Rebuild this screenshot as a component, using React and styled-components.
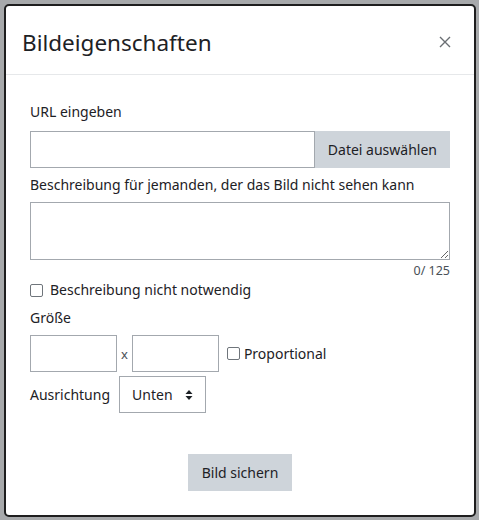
import React from "react";
import styled, { createGlobalStyle } from "styled-components";

const GlobalStyle = createGlobalStyle`
    html, body {
        margin: 0;
        padding: 0;
        background: #a7a9ab;
    }
    body {
        font-family: "Noto Sans", "Open Sans", sans-serif;
        color: #1d2125;
    }
`;

const Backdrop = styled.div`
    width: 479px;
    height: 520px;
    padding: 4px 3px 3px 4px;
    box-sizing: border-box;
`;

const Dialog = styled.div`
    width: 472px;
    height: 513px;
    box-sizing: border-box;
    background: #fff;
    border: 2px solid #1e1e1e;
    border-radius: 5px;
    display: flex;
    flex-direction: column;
`;

const Header = styled.div`
    display: flex;
    align-items: center;
    justify-content: space-between;
    height: 69px;
    box-sizing: border-box;
    padding: 4px 22px 0 16px;
    border-bottom: 1px solid #e6e8ea;
`;

const Title = styled.h5`
    margin: 0;
    font-size: 22.5px;
    font-weight: 400;
    line-height: 1.2;
    color: #1d2125;
`;

const Close = styled.button`
    border: none;
    background: none;
    padding: 0;
    width: 14px;
    height: 14px;
    display: flex;
    align-items: center;
    justify-content: center;
    cursor: pointer;
`;

const Body = styled.div`
    flex: 1;
    display: flex;
    flex-direction: column;
    padding: 26px 24px 0 24px;
    font-size: 14px;
`;

const Label = styled.label`
    display: block;
    line-height: 22px;
    margin-top: ${(p) => p.$mt || 0}px;
    margin-bottom: ${(p) => p.$mb || 8}px;
`;

const InputGroup = styled.div`
    display: flex;
    height: 37px;
    margin-bottom: 6px;
`;

const TextInput = styled.input`
    box-sizing: border-box;
    height: 37px;
    width: ${(p) => (p.$w ? `${p.$w}px` : "auto")};
    flex: ${(p) => (p.$w ? "none" : 1)};
    min-width: 0;
    border: 1px solid #a3a8ae;
    border-radius: 0;
    padding: 6px 10px;
    font: inherit;
    outline: none;
`;

const GreyButton = styled.button`
    box-sizing: border-box;
    height: 37px;
    border: none;
    border-radius: 0;
    background: #ced4da;
    color: #1d2125;
    font: inherit;
    padding: 0 ${(p) => p.$px || 13}px;
    cursor: pointer;
`;

const TextArea = styled.textarea`
    box-sizing: border-box;
    display: block;
    width: 100%;
    height: 58px;
    border: 1px solid #a3a8ae;
    border-radius: 0;
    font: inherit;
    padding: 6px 10px;
    resize: vertical;
    outline: none;
`;

const Counter = styled.div`
    text-align: right;
    font-size: 12.5px;
    line-height: 17px;
    padding-top: 2px;
    color: #495057;
`;

const CheckRow = styled.label`
    display: flex;
    align-items: center;
    gap: ${(p) => p.$gap || 7}px;
    margin-left: ${(p) => p.$ml || 0}px;
    line-height: 22px;
`;

const Box = styled.span`
    width: 11px;
    height: 11px;
    border: 1px solid #6f757b;
    border-radius: 2px;
    background: #fff;
    flex: none;
`;

const Row = styled.div`
    display: flex;
    align-items: center;
    gap: ${(p) => p.$gap || 8}px;
    margin-top: ${(p) => p.$mt || 0}px;
`;

const Times = styled.span`
    font-size: 13px;
    color: #495057;
`;

const Select = styled.div`
    box-sizing: border-box;
    width: 87px;
    height: 37px;
    border: 1px solid #a3a8ae;
    display: flex;
    align-items: center;
    justify-content: space-between;
    padding: 0 12px 0 12px;
`;

const Footer = styled.div`
    display: flex;
    justify-content: center;
    margin-top: 41px;
`;

const App = () => {
    return (
        <>
            <GlobalStyle />
            <Backdrop>
                <Dialog>
                    <Header>
                        <Title>Bildeigenschaften</Title>
                        <Close aria-label="Schließen">
                            <svg width="12" height="12" viewBox="0 0 12 12">
                                <path d="M1 1L11 11M11 1L1 11" stroke="#6a6e73" strokeWidth="1.4" />
                            </svg>
                        </Close>
                    </Header>
                    <Body>
                        <Label>URL eingeben</Label>
                        <InputGroup>
                            <TextInput type="text" />
                            <GreyButton>Datei auswählen</GreyButton>
                        </InputGroup>
                        <Label $mb={6}>Beschreibung für jemanden, der das Bild nicht sehen kann</Label>
                        <TextArea />
                        <Counter>0/ 125</Counter>
                        <CheckRow>
                            <Box />
                            Beschreibung nicht notwendig
                        </CheckRow>
                        <Label $mb={6} $mt={6}>Größe</Label>
                        <Row $gap={4}>
                            <TextInput $w={87} type="text" />
                            <Times>x</Times>
                            <TextInput $w={87} type="text" />
                            <CheckRow $gap={4} $ml={4}>
                                <Box />
                                Proportional
                            </CheckRow>
                        </Row>
                        <Row $mt={4} $gap={9}>
                            <span>Ausrichtung</span>
                            <Select>
                                <span>Unten</span>
                                <svg width="8" height="12" viewBox="0 0 8 12">
                                    <path d="M4 1L7.5 5H0.5Z M4 11L0.5 7H7.5Z" fill="#1d2125" />
                                </svg>
                            </Select>
                        </Row>
                        <Footer>
                            <GreyButton $px={14}>Bild sichern</GreyButton>
                        </Footer>
                    </Body>
                </Dialog>
            </Backdrop>
        </>
    );
};

export default App;
